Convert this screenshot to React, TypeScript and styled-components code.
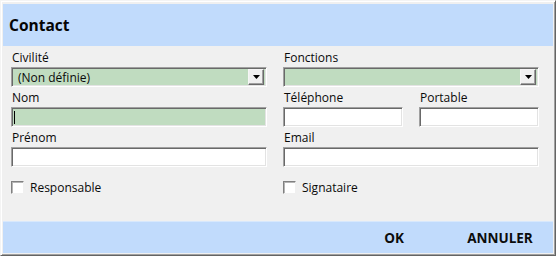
import React from "react";
import styled, { createGlobalStyle } from "styled-components";

const Global = createGlobalStyle`
  html, body { margin: 0; padding: 0; background: #f0f0f0; }
  body { font-family: "Open Sans", "Noto Sans", sans-serif; }
  * { box-sizing: border-box; }
`;

const Window = styled.div`
  width: 556px;
  height: 256px;
  display: flex;
  flex-direction: column;
  background: #f0f0f0;
  border-style: solid;
  border-width: 1px;
  border-color: #f4f4f4 #646464 #646464 #f4f4f4;
  box-shadow: inset 1px 1px 0 #ffffff, inset -1px -1px 0 #a0a0a0;
  padding: 3px 2px 2px 2px;
`;

const Header = styled.div`
  height: 42px;
  flex: none;
  background: #c1dbfc;
  display: flex;
  align-items: center;
  padding-left: 6px;
  font-weight: 700;
  font-size: 15.5px;
  color: #050505;
`;

const Body = styled.div`
  flex: 1;
  display: grid;
  grid-template-columns: 256px 256px;
  column-gap: 16px;
  align-content: start;
  padding: 4px 0 0 8px;
`;

const Column = styled.div`
  display: flex;
  flex-direction: column;
  gap: 3px;
`;

const Pair = styled.div`
  display: grid;
  grid-template-columns: 120px 120px;
  column-gap: 16px;
`;

const Field = styled.div`
  display: flex;
  flex-direction: column;
`;

const Label = styled.div`
  height: 17px;
  font-size: 12px;
  line-height: 15px;
  color: #0a0a0a;
  padding-left: 1px;
`;

const Box = styled.div<{ $green?: boolean }>`
  height: 20px;
  display: flex;
  align-items: center;
  background: ${(p) => (p.$green ? "#c0dcc0" : "#ffffff")};
  border-style: solid;
  border-width: 1px;
  border-color: #a0a0a0 #ffffff #ffffff #a0a0a0;
  box-shadow: inset 1px 1px 0 #696969, inset -1px -1px 0 #e3e3e3;
  padding: 0 2px 0 6px;
  font-size: 12px;
  color: #0a0a0a;
`;

const Value = styled.span`
  flex: 1;
`;

const Caret = styled.span`
  width: 1px;
  height: 13px;
  background: #000;
  margin-left: -4px;
`;

const ArrowButton = styled.span`
  width: 16px;
  height: 16px;
  flex: none;
  display: flex;
  align-items: center;
  justify-content: center;
  background: #f0f0f0;
  border-style: solid;
  border-width: 1px;
  border-color: #f6f6f6 #696969 #696969 #f6f6f6;
  box-shadow: inset -1px -1px 0 #a0a0a0;
`;

const CheckRow = styled.label`
  margin-top: 9px;
  display: flex;
  align-items: center;
  gap: 6px;
  font-size: 12px;
  color: #0a0a0a;
`;

const Check = styled.span`
  width: 13px;
  height: 13px;
  flex: none;
  background: #fff;
  border-style: solid;
  border-width: 1px;
  border-color: #808080 #f0f0f0 #f0f0f0 #808080;
  box-shadow: inset 1px 1px 0 #b5b5b5;
`;

const Footer = styled.div`
  height: 32px;
  flex: none;
  margin-top: auto;
  background: #c1dbfc;
  border-top: 1px solid #d8e8fc;
  display: flex;
  justify-content: flex-end;
`;

const FooterButton = styled.button`
  width: 106px;
  height: 100%;
  border: none;
  background: transparent;
  font-family: "Open Sans", "Noto Sans", sans-serif;
  font-weight: 700;
  font-size: 13.5px;
  color: #0c0c0c;
  padding: 0;
`;

const Arrow = () => (
  <svg width="7" height="4" viewBox="0 0 7 4">
    <polygon points="0,0 7,0 3.5,4" fill="#000" />
  </svg>
);

export default function App() {
  return (
    <>
      <Global />
      <Window>
        <Header>Contact</Header>
        <Body>
          <Column>
            <Field>
              <Label>Civilité</Label>
              <Box $green>
                <Value>(Non définie)</Value>
                <ArrowButton>
                  <Arrow />
                </ArrowButton>
              </Box>
            </Field>
            <Field>
              <Label>Nom</Label>
              <Box $green>
                <Caret />
              </Box>
            </Field>
            <Field>
              <Label>Prénom</Label>
              <Box />
            </Field>
            <CheckRow>
              <Check />
              Responsable
            </CheckRow>
          </Column>
          <Column>
            <Field>
              <Label>Fonctions</Label>
              <Box $green>
                <Value />
                <ArrowButton>
                  <Arrow />
                </ArrowButton>
              </Box>
            </Field>
            <Pair>
              <Field>
                <Label>Téléphone</Label>
                <Box />
              </Field>
              <Field>
                <Label>Portable</Label>
                <Box />
              </Field>
            </Pair>
            <Field>
              <Label>Email</Label>
              <Box />
            </Field>
            <CheckRow>
              <Check />
              Signataire
            </CheckRow>
          </Column>
        </Body>
        <Footer>
          <FooterButton>OK</FooterButton>
          <FooterButton>ANNULER</FooterButton>
        </Footer>
      </Window>
    </>
  );
}
